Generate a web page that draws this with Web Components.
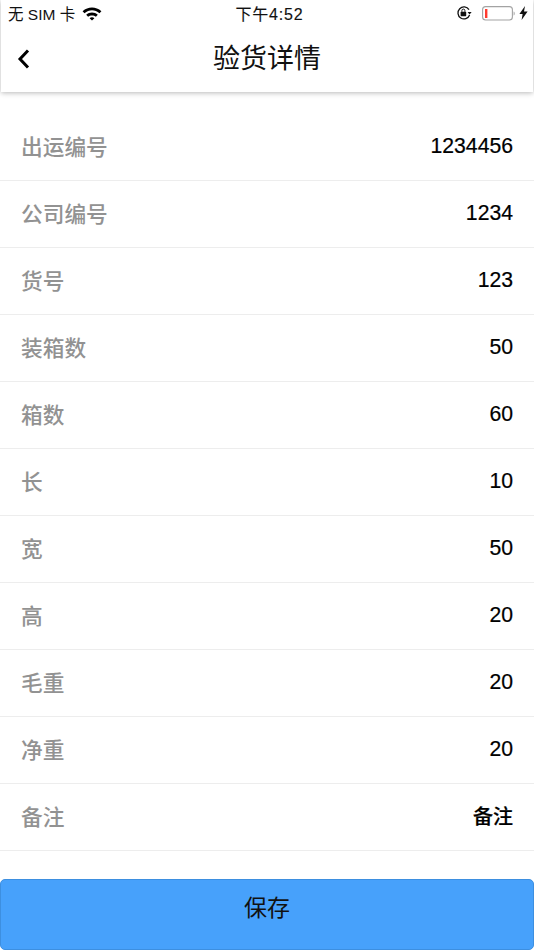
<!DOCTYPE html>
<html lang="zh"><head><meta charset="utf-8"><style>
html,body{margin:0;padding:0;background:#fff}
body{width:534px;height:950px;overflow:hidden;font-family:"Liberation Sans","Noto Sans CJK SC",sans-serif}
</style></head><body>
<check-page></check-page>
<script>
const CJK='"Noto Sans CJK SC","Liberation Sans",sans-serif';
const LAT='"Liberation Sans","Noto Sans CJK SC",sans-serif';
class StatusBar extends HTMLElement{constructor(){super();this.attachShadow({mode:'open'}).innerHTML=`<style>
:host{display:grid;grid-template-columns:1fr auto 1fr;align-items:center;height:26px;padding:0 5px 0 7px;font:15.5px ${LAT};color:#111}
.l{display:flex;align-items:center;gap:7px}.r{display:flex;align-items:center;justify-content:flex-end;gap:10px}
.t{font-size:16px;letter-spacing:.8px;-webkit-text-stroke:.15px #111;margin-left:3px}svg{display:block}
</style>
<div class="l"><span>无 SIM 卡</span><svg width="20" height="15" viewBox="0 0 20 15"><path d="M.6 5.2C6 .2 14 .2 19.4 5.2l-1.9 2C13 3.2 7 3.2 2.5 7.2z M4.2 8.8c3.3-3 8.3-3 11.6 0L13.9 10.8c-2.2-1.9-5.6-1.9-7.8 0z M7.6 12.2c1.4-1.2 3.4-1.2 4.8 0L10 14.6z" fill="#000"/></svg></div>
<div class="t">下午4:52</div>
<div class="r"><svg width="16" height="16" viewBox="0 0 16 16" fill="none"><path d="M13 4.6A6 6 0 1 0 13.6 10" stroke="#111" stroke-width="1.3"/><path d="M11.6 7h4l-2 2.6z" fill="#111"/><rect x="4.6" y="6.8" width="5.6" height="4.4" rx=".6" fill="#111"/><path d="M5.9 6.8V5.6a1.5 1.5 0 0 1 3 0v1.2" stroke="#111"/></svg>
<span style="display:flex;align-items:center;gap:4px"><svg width="33" height="15" viewBox="0 0 33 15" fill="none"><rect x=".6" y=".6" width="29.8" height="13.4" rx="3" stroke="#a3a3a3" stroke-width="1.1"/><rect x="3" y="3" width="2.4" height="9" fill="#ff3b30"/><path d="M31.6 5.4c.8.2 1.1 1 1.1 2s-.3 1.8-1.1 2z" fill="#a3a3a3"/></svg>
<svg width="9" height="14" viewBox="0 0 9 14"><path d="M6 0 .4 8h3.2L2.6 14 8.6 5.6H5z" fill="#111"/></svg></span></div>`}}
customElements.define('status-bar',StatusBar);
class NavBar extends HTMLElement{constructor(){super();this.attachShadow({mode:'open'}).innerHTML=`<style>
:host{display:block;margin:0 1px;background:#fff;box-shadow:0 1px 5px rgba(0,0,0,.28)}
.b{display:grid;grid-template-columns:46px 1fr 46px;align-items:center;height:66px}
.a{display:flex;justify-content:center;padding-bottom:1px}
h1{margin:0;text-align:center;font:400 27px ${CJK};color:#111;line-height:61px;padding-bottom:5px}
</style><status-bar></status-bar><div class="b"><div class="a"><svg width="14" height="22" viewBox="0 0 14 22" fill="none"><path d="M11 2.5 3 11l8 8.5" stroke="#000" stroke-width="3"/></svg></div><h1><slot></slot></h1><div></div></div>`}}
customElements.define('nav-bar',NavBar);
class InfoRow extends HTMLElement{constructor(){super();this.attachShadow({mode:'open'}).innerHTML=`<style>
:host{display:flex;justify-content:space-between;align-items:center;height:66px;padding:0 21px 0 21px;border-bottom:1px solid #ededed}
.k{font:500 21.7px ${CJK};color:#929292;position:relative;top:-2px}
.v{font:500 21.2px ${LAT};color:#000;-webkit-text-stroke:.2px #000;position:relative;top:-1px}
.v.c{font:500 20px ${CJK};-webkit-text-stroke:.2px #000;top:-2px}
</style><span class="k"></span><span class="v"></span>`;
const v=this.shadowRoot.querySelector('.v');this.shadowRoot.querySelector('.k').textContent=this.getAttribute('k');v.textContent=this.getAttribute('v');if(!/^\d+$/.test(v.textContent))v.classList.add('c')}}
customElements.define('info-row',InfoRow);
class SaveBtn extends HTMLElement{constructor(){super();this.attachShadow({mode:'open'}).innerHTML=`<style>
:host{display:flex;align-items:center;justify-content:center;height:51px;background:#47a1fb;border:1px solid #3d8fe0;border-radius:5px;font:400 23px ${CJK};color:#111;padding-bottom:18px}
</style><slot></slot>`}}
customElements.define('save-btn',SaveBtn);
class CheckPage extends HTMLElement{constructor(){super();const d=[['出运编号','1234456'],['公司编号','1234'],['货号','123'],['装箱数','50'],['箱数','60'],['长','10'],['宽','50'],['高','20'],['毛重','20'],['净重','20'],['备注','备注']];
this.attachShadow({mode:'open'}).innerHTML=`<style>
:host{display:flex;flex-direction:column;height:950px}
.list{flex:1;padding-top:22px}
</style><nav-bar>验货详情</nav-bar><div class="list">${d.map(r=>`<info-row k="${r[0]}" v="${r[1]}"></info-row>`).join('')}</div><save-btn>保存</save-btn>`}}
customElements.define('check-page',CheckPage);
</script></body></html>
